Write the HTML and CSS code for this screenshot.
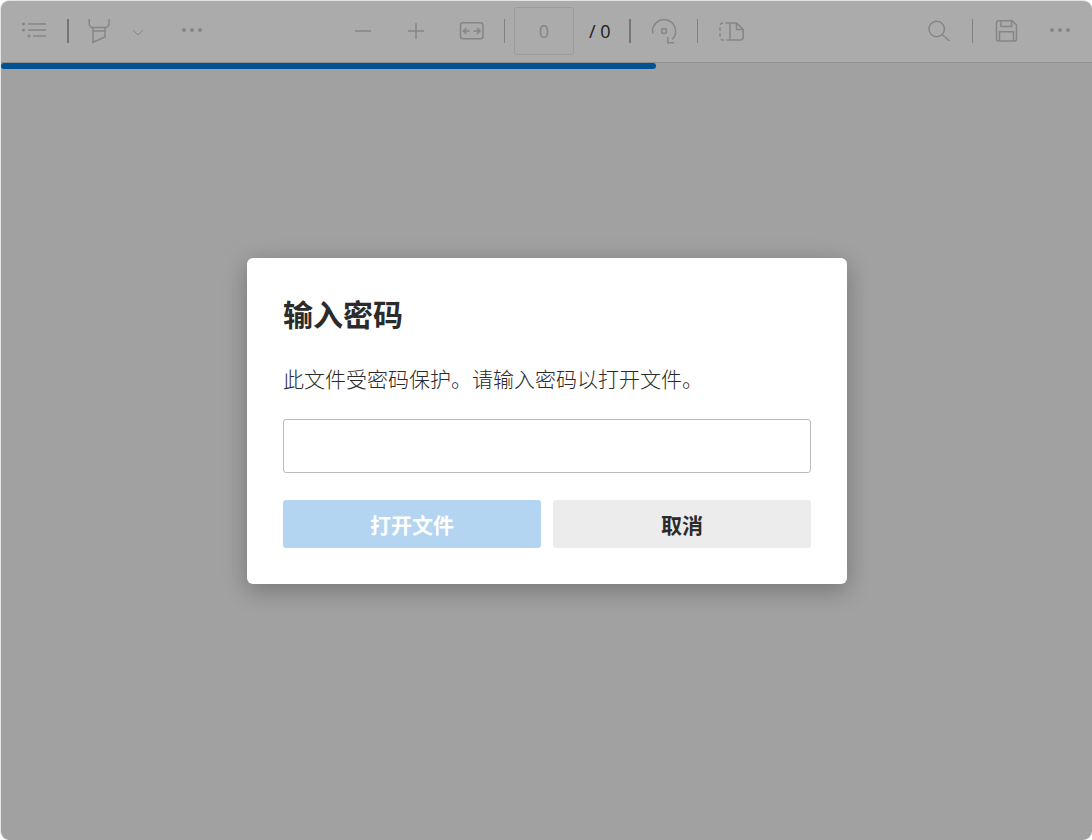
FILE: index.html
```html
<!DOCTYPE html>
<html lang="zh-CN">
<head>
<meta charset="utf-8">
<title>输入密码</title>
<link rel="stylesheet" href="styles.css">
</head>
<body>
<div class="app">
  <header class="toolbar">
    <div class="group group-left">
      <button class="tool"><svg class="ico" viewBox="20 17 28 28"><path d="M28 24H46M28 30H46M33 36H46"/><circle class="fill" cx="23.5" cy="24" r="1.6"/><circle class="fill" cx="23.5" cy="30" r="1.6"/><circle class="fill" cx="29" cy="36" r="1.6"/></svg></button>
      <span class="sep sep-strong sep-a"></span>
      <button class="tool tool-b"><svg class="ico" viewBox="85 17 28 28"><path d="M89.200 19V25L91.500 27.500H106.500L109 25V19M93 31H105V37L93 42.300ZM93 27.500V31M105 27.500V31"/></svg></button>
      <button class="tool tool-narrow"><svg class="ico" viewBox="124 17 28 28"><path class="thin" d="M133 30L138 35L143 30"/></svg></button>
      <button class="tool tool-c"><svg class="ico" viewBox="178 17 28 28"><circle class="fill" cx="184" cy="30" r="2"/><circle class="fill" cx="192" cy="30" r="2"/><circle class="fill" cx="200" cy="30" r="2"/></svg></button>
    </div>
    <div class="group group-center">
      <button class="tool"><svg class="ico" viewBox="349 17 28 28"><path d="M355 31H371"/></svg></button>
      <button class="tool tool-plus"><svg class="ico" viewBox="402 17 28 28"><path d="M408 31H424M416 23V39"/></svg></button>
      <button class="tool tool-fit"><svg class="ico" viewBox="457 17 28 28"><rect x="460.500" y="22.800" width="22.500" height="16" rx="2.500"/><path d="M463.500 31H469.500M466.500 28L463.500 31L466.500 34M473.500 31H480M477 28L480 31L477 34"/></svg></button>
      <span class="sep sep-d"></span>
      <div class="page-box">0</div>
      <span class="page-total">/ 0</span>
      <span class="sep sep-strong sep-e"></span>
      <button class="tool tool-rot"><svg class="ico" viewBox="650 17 28 28"><path d="M652.800 33.500A11.500 11.500 0 1 1 672 39.500M667.800 37V42.800H674"/><circle cx="664" cy="31" r="2.500"/></svg></button>
      <span class="sep sep-f"></span>
      <button class="tool tool-page"><svg class="ico" viewBox="717 17 28 28"><path class="dash" d="M729 23H723Q720 23 720 26V37Q720 40 723 40H729"/><path d="M730 23H736.500L743.200 29.500V37Q743.200 40 740.500 40H730ZM736.500 23V29.500H743.200"/></svg></button>
    </div>
    <div class="group group-right">
      <button class="tool"><svg class="ico" viewBox="925 17 28 28"><circle cx="936.700" cy="29" r="7.700"/><path d="M942 34.500L949.500 41"/></svg></button>
      <span class="sep sep-g"></span>
      <button class="tool tool-save"><svg class="ico" viewBox="992 17 28 28"><path d="M998.500 20.800H1012L1016.500 25V39Q1016.500 41 1014.500 41H998.500Q996.500 41 996.500 39V23Q996.500 20.800 998.500 20.800ZM1001 21V26.500H1011.500V21M999.500 41V31.700H1013.500V41"/></svg></button>
      <button class="tool tool-more"><svg class="ico" viewBox="1046 17 28 28"><circle class="fill" cx="1052" cy="30" r="2"/><circle class="fill" cx="1060" cy="30" r="2"/><circle class="fill" cx="1068" cy="30" r="2"/></svg></button>
    </div>
  </header>
  <main class="viewer">
    <div class="progress"></div>
  </main>
  <div class="overlay">
    <section class="dialog">
      <h1 class="dialog-title">输入密码</h1>
      <p class="dialog-text">此文件受密码保护。请输入密码以打开文件。</p>
      <input class="dialog-input" type="password" aria-label="密码">
      <div class="dialog-actions">
        <button class="action action-primary">打开文件</button>
        <button class="action action-secondary">取消</button>
      </div>
    </section>
  </div>
</div>
</body>
</html>
```
FILE: styles.css
```css
* { box-sizing: border-box; }
html, body { height: 100%; }
body {
  margin: 0;
  background: #fff;
  overflow: hidden;
  font-family: "Noto Sans CJK SC", "Noto Sans", sans-serif;
}
.app {
  position: relative;
  width: 1092px;
  height: 840px;
  display: flex;
  flex-direction: column;
  border-style: solid;
  border-color: #e4e4e4;
  border-width: 1px 0 0 1px;
  border-radius: 9px;
  overflow: hidden;
  background: #e9e9e9;
}
.toolbar {
  flex: none;
  height: 62px;
  padding: 0 10px 1px 11px;
  display: flex;
  align-items: center;
  background: #f8f8f8;
  border-bottom: 1px solid #cfcfcf;
}
.group { display: flex; align-items: center; }
.group-center { margin-left: 127px; }
.group-right { margin-left: auto; }
.tool {
  flex: none;
  width: 44px;
  height: 44px;
  padding: 0;
  border: 0;
  background: none;
  display: flex;
  align-items: center;
  justify-content: center;
}
.tool-b { margin-left: 8px; }
.tool-narrow { width: 28px; margin-left: 3px; }
.tool-c { margin-left: 18px; }
.tool-plus { margin-left: 9px; }
.tool-fit { margin-left: 11px; }
.tool-rot { margin-left: 11px; }
.tool-page { margin-left: 11px; }
.tool-save { margin-left: 11px; }
.tool-more { margin-left: 10px; }
.ico {
  display: block;
  width: 28px;
  height: 28px;
  overflow: visible;
  fill: none;
  stroke: #c2c2c2;
  stroke-width: 1.5;
}
.ico .fill { fill: #c2c2c2; stroke: none; }
.ico .dash { stroke-dasharray: 3.5 2.5; }
.ico .thin { stroke-width: 1; }
.sep {
  flex: none;
  width: 1px;
  height: 24px;
  background: #bcbcbc;
}
.sep-strong { width: 2px; background: #ababab; }
.sep-a { margin-left: 11px; }
.sep-d { margin-left: 11px; }
.sep-e { margin-left: 14px; }
.sep-f { margin-left: 11px; }
.sep-g { margin-left: 11px; }
.page-box {
  flex: none;
  width: 60px;
  height: 48px;
  margin-left: 9px;
  border: 1px solid #e3e3e3;
  border-radius: 3px;
  display: flex;
  align-items: center;
  justify-content: center;
  font-family: "Open Sans", sans-serif;
  font-size: 18px;
  color: #c2c2c2;
}
.page-total {
  flex: none;
  width: 26px;
  margin-left: 15px;
  font-family: "Open Sans", sans-serif;
  font-size: 18px;
  line-height: 24px;
  white-space: nowrap;
  color: #2b2b2b;
}
.viewer { flex: 1; min-height: 0; }
.progress {
  width: 655px;
  height: 6px;
  background: #0078d4;
  border-radius: 3px;
}
.overlay {
  position: absolute;
  inset: 0;
  padding: 1px 0 0 1px;
  display: flex;
  align-items: center;
  justify-content: center;
  background: rgba(0, 0, 0, 0.31);
}
.dialog {
  width: 600px;
  padding: 36px;
  background: #fff;
  border-radius: 6px;
  box-shadow: 0 6px 24px rgba(0, 0, 0, 0.28);
}
.dialog-title {
  margin: 0;
  font-size: 30px;
  line-height: 38px;
  font-weight: 700;
  color: #2b2b2b;
}
.dialog-text {
  margin: 31px 0 0;
  font-size: 21px;
  font-weight: 300;
  line-height: 30px;
  white-space: nowrap;
  color: #2b2b2b;
}
.dialog-input {
  display: block;
  width: 100%;
  height: 54px;
  margin-top: 26px;
  border: 1px solid #bbb;
  border-radius: 3px;
  background: #fff;
}
.dialog-actions {
  display: flex;
  gap: 12px;
  margin-top: 27px;
}
.action {
  flex: 1;
  height: 48px;
  padding: 0;
  border: 0;
  border-radius: 3px;
  font-family: inherit;
  font-size: 21px;
  font-weight: 700;
}
.action-primary { background: #b3d5f1; color: #fff; }
.action-secondary { background: #ececec; color: #2b2b2b; }
```
